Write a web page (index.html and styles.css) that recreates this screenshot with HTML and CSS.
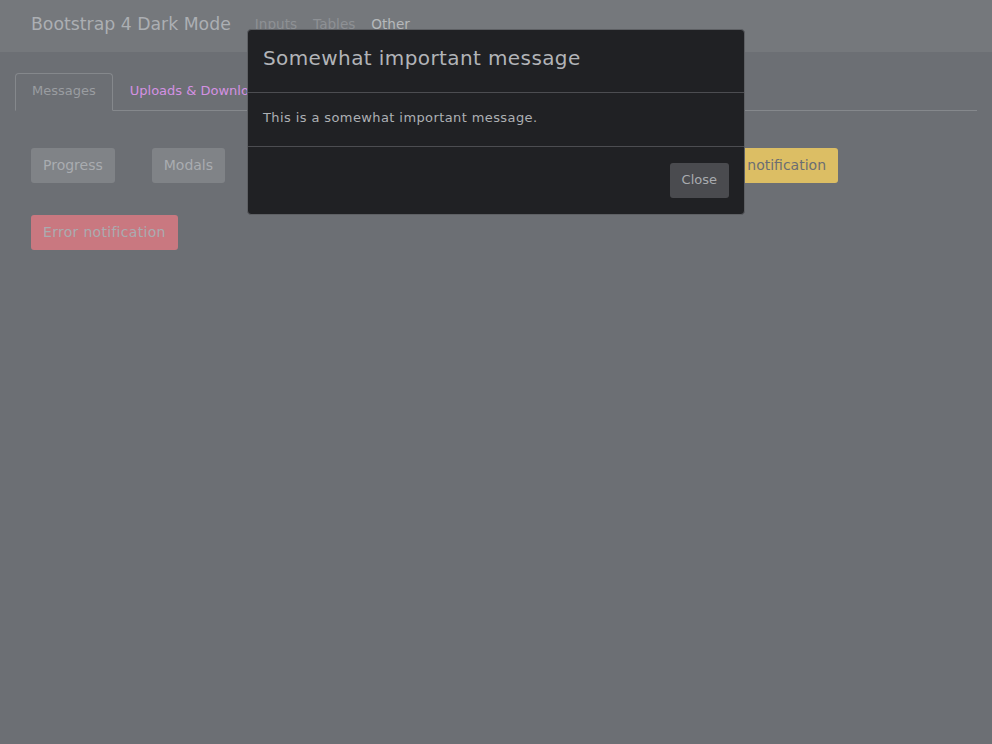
FILE: index.html
```html
<!DOCTYPE html>
<html lang="en">
<head>
<meta charset="utf-8">
<title>Bootstrap 4 Dark Mode</title>
<link rel="stylesheet" href="styles.css">
</head>
<body>
<nav class="navbar">
  <span class="brand">Bootstrap 4 Dark Mode</span>
  <ul class="nav-links">
    <li class="nav-link">Inputs</li>
    <li class="nav-link">Tables</li>
    <li class="nav-link active">Other</li>
  </ul>
</nav>
<main class="container">
  <ul class="tabs">
    <li class="tab active">Messages</li>
    <li class="tab">Uploads &amp; Downloads</li>
  </ul>
  <div class="tab-content">
    <div class="btn-row">
      <button class="btn btn-secondary">Progress</button>
      <button class="btn btn-secondary">Modals</button>
      <button class="btn btn-info">Info notification</button>
      <button class="btn btn-success">Success notification</button>
      <button class="btn btn-warning">Warning notification</button>
      <button class="btn btn-danger">Error notification</button>
    </div>
  </div>
</main>
<div class="modal-wrap">
  <div class="modal">
    <div class="modal-header">
      <h5 class="modal-title">Somewhat important message</h5>
    </div>
    <div class="modal-body">This is a somewhat important message.</div>
    <div class="modal-footer">
      <button class="btn btn-close">Close</button>
    </div>
  </div>
</div>
</body>
</html>
```
FILE: styles.css
```css
* { box-sizing: border-box; }
html, body { margin: 0; padding: 0; }
body {
  background: #6c6f74;
  font-family: "DejaVu Sans", sans-serif;
  color: #a9acb0;
  height: 744px;
  overflow: hidden;
}
.navbar {
  height: 52px;
  background: #75787c;
  display: flex;
  align-items: center;
  padding: 0 31px;
}
.brand {
  font-size: 17.3px;
  color: #acafb3;
  margin-right: 24px;
  position: relative;
  top: -2px;
}
.nav-links {
  list-style: none;
  display: flex;
  gap: 16px;
  margin: 0;
  padding: 0;
  position: relative;
  top: -2px;
}
.nav-link { font-size: 13.6px; color: #8e9195; }
.nav-link.active { color: #b6b8bb; }
.container { padding: 21px 15px 0; }
.tabs {
  list-style: none;
  margin: 0;
  padding: 0;
  display: flex;
  border-bottom: 1px solid #85888c;
}
.tab {
  height: 38px;
  padding: 0 16px 4px;
  display: flex;
  align-items: center;
  font-size: 13px;
  color: #d491e2;
  border: 1px solid transparent;
  border-radius: 4px 4px 0 0;
  margin-bottom: -1px;
}
.tab.active {
  color: #9a9da1;
  border-color: #85888c #85888c #6c6f74;
}
.tab-content { padding: 37px 16px; }
.btn-row {
  display: flex;
  flex-wrap: wrap;
  column-gap: 37px;
  row-gap: 32px;
  max-width: 900px;
}
.btn {
  font-family: inherit;
  height: 35px;
  padding: 0 12px 2px;
  font-size: 14px;
  border: none;
  border-radius: 3px;
  color: #a9acb0;
}
.btn-secondary { background: #808387; }
.btn-info { background: #5d8fa3; padding: 0 22px 2px; }
.btn-success { background: #66a070; padding: 0 22px 2px; }
.btn-warning { background: #dcbe64; color: #6b6e73; }
.btn-danger { background: #c97880; letter-spacing: 0.3px; }
.modal-wrap {
  position: fixed;
  inset: 0;
  display: flex;
  justify-content: center;
  align-items: flex-start;
  padding-top: 29px;
}
.modal {
  width: 498px;
  background: #202124;
  border: 1px solid #5e6064;
  border-radius: 4px;
  color: #adb0b4;
}
.modal-header {
  height: 63px;
  padding: 0 15px 6px;
  display: flex;
  align-items: center;
  border-bottom: 1px solid #4c4d51;
}
.modal-title {
  margin: 0;
  font-size: 20px;
  letter-spacing: 0.4px;
  font-weight: normal;
  color: #b2b4b8;
}
.modal-body {
  height: 54px;
  padding: 0 15px 4px;
  display: flex;
  align-items: center;
  font-size: 13px;
  letter-spacing: 0.4px;
  border-bottom: 1px solid #4c4d51;
}
.modal-footer {
  height: 67px;
  padding: 0 15px;
  display: flex;
  align-items: center;
  justify-content: flex-end;
}
.btn-close {
  height: 35px;
  font-size: 13px;
  background: #4a4b4f;
  color: #a9abaf;
  padding: 0 12px 3px;
}
```
